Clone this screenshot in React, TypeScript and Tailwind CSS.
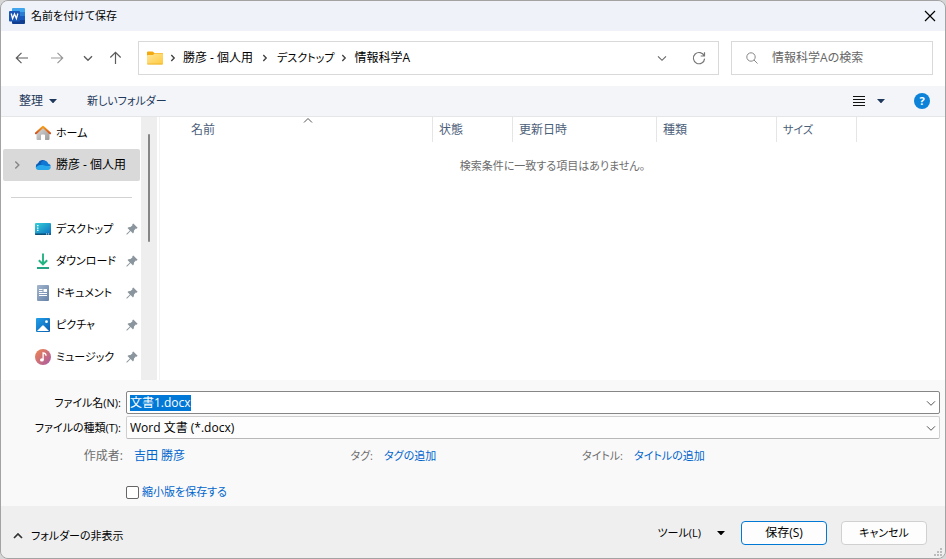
import { useEffect, useRef, useState } from "react";
import type { ReactNode } from "react";

type StrokeProps = { className?: string; d: string; width?: number };

function Stroke({ className = "", d, width = 1 }: StrokeProps) {
  return (
    <svg viewBox="0 0 16 16" className={`size-4 shrink-0 ${className}`} fill="none" stroke="currentColor" strokeWidth={width} aria-hidden="true">
      <path d={d} />
    </svg>
  );
}

const DOWN = "M4 6.3 8 10.3 12 6.3";
const RIGHT = "M6.3 5 9.2 8 6.3 11";

function Triangle({ className = "" }: { className?: string }) {
  return (
    <svg viewBox="0 0 8 4" className={`h-1 w-2 shrink-0 ${className}`} fill="currentColor" aria-hidden="true">
      <path d="M0 0h8L4 4.4z" />
    </svg>
  );
}

function WordIcon() {
  return (
    <svg viewBox="0 0 16 16" className="size-4 shrink-0" aria-hidden="true">
      <path d="M4 0h11q1 0 1 1v3.2H3V1q0-1 1-1z" fill="#41a5ee" />
      <path d="M3 4h13v4H3z" fill="#2b7cd3" />
      <path d="M3 8h13v4H3z" fill="#185abd" />
      <path d="M3 12h13v3q0 1-1 1H4q-1 0-1-1z" fill="#103f91" />
      <rect x="0" y="3" width="11" height="10.4" rx="1" fill="#1a56b4" />
      <path d="M2.200 5.500 3.600 10.600 5.500 6 7.400 10.600 8.800 5.500" fill="none" stroke="#fff" strokeWidth="1.300" />
    </svg>
  );
}

function FolderIcon() {
  return (
    <svg viewBox="0 0 16 14" className="h-3.5 w-4 shrink-0" aria-hidden="true">
      <defs>
        <linearGradient id="folder" x1="0" y1="0" x2="1" y2="1">
          <stop offset="0" stopColor="#ffe69a" />
          <stop offset="1" stopColor="#ffc93c" />
        </linearGradient>
      </defs>
      <path d="M0 1.500Q0 .5 1 .5h4.600L7.400 2H15q1 0 1 1v4H0z" fill="#f2a90f" />
      <path d="M0 5q0-1 1-1h5l1.500-1.500H15q1 0 1 1v9q0 1-1 1H1q-1 0-1-1z" fill="url(#folder)" />
      <path d="M.4 13h15.200" stroke="#eab02a" strokeWidth=".8" />
    </svg>
  );
}

function HomeIcon() {
  return (
    <svg viewBox="0 0 16 16" className="size-4" aria-hidden="true">
      <defs>
        <linearGradient id="wall" x1="0" y1="0" x2="1" y2="1">
          <stop offset="0" stopColor="#dcdcdc" />
          <stop offset="1" stopColor="#9a9a9a" />
        </linearGradient>
        <linearGradient id="roof" x1="0" y1="0" x2="0" y2="1">
          <stop offset="0" stopColor="#f7a21b" />
          <stop offset="1" stopColor="#d3501c" />
        </linearGradient>
      </defs>
      <path d="M1.500 7.500 8 2l6.500 5.500V14q0 1-1 1H10V10.500q0-1-1-1H7q-1 0-1 1V15H2.500q-1 0-1-1z" fill="url(#wall)" />
      <path d="M.9 8.300 8 1.700l7.100 6.600" fill="none" stroke="url(#roof)" strokeWidth="2" strokeLinecap="round" strokeLinejoin="round" />
    </svg>
  );
}

function CloudIcon() {
  return (
    <svg viewBox="0 0 16 16" className="size-4" aria-hidden="true">
      <path d="M3.500 12.500A3.200 3.200 0 0 1 3 6.300a4.800 4.800 0 0 1 8.700-.9L8 10z" fill="#0a5cb8" />
      <path d="M5.500 6.200A5 5 0 0 1 11 3.900c1.200.6 2 1.600 2.300 2.800a3 3 0 0 1 2.500 2.500L10 10z" fill="#0f78d4" />
      <path d="M.6 10.500Q4.500 6 10 8.800l5.700.7a3 3 0 0 1-2.900 3.500H3.700Q1.400 13 .6 10.500z" fill="#28a8ea" />
    </svg>
  );
}

function DesktopIcon() {
  return (
    <svg viewBox="0 0 16 16" className="size-4" aria-hidden="true">
      <defs>
        <linearGradient id="desk" x1="0" y1="0" x2="1" y2="1">
          <stop offset="0" stopColor="#35d0d8" />
          <stop offset="1" stopColor="#0a6cc0" />
        </linearGradient>
      </defs>
      <rect y="2" width="16" height="12" rx="1" fill="url(#desk)" />
      <path d="M2 4h1.500v1.300H2zM2 6.400h1.500v1.300H2zM2 8.800h1.500v1.300H2z" fill="#fff" />
      <path d="M0 12.500h16v.5q0 1-1 1H1q-1 0-1-1z" fill="#0c5078" />
      <path d="M11 13h1.200M13 13h1.200" stroke="#e5f4ff" />
    </svg>
  );
}

function DownloadIcon() {
  return (
    <svg viewBox="0 0 16 16" className="size-4" fill="none" strokeWidth="1.900" aria-hidden="true">
      <path d="M8 .5V11M3.800 7.200 8 11.300l4.200-4.100" stroke="#23b483" />
      <path d="M2 15h12" stroke="#18a07c" />
    </svg>
  );
}

function DocumentIcon() {
  return (
    <svg viewBox="0 0 16 16" className="size-4" aria-hidden="true">
      <defs>
        <linearGradient id="doc" x1="0" y1="0" x2="1" y2="1">
          <stop offset="0" stopColor="#a3b6cd" />
          <stop offset="1" stopColor="#6582a8" />
        </linearGradient>
      </defs>
      <rect x="2" width="12" height="16" rx="1" fill="url(#doc)" />
      <path d="M4 4.500h3.500M4 6.500h3.500M4 8.500h8M4 10.500h8" stroke="#fff" />
      <rect x="8.500" y="4" width="3.500" height="3" fill="#fff" />
    </svg>
  );
}

function PictureIcon() {
  return (
    <svg viewBox="0 0 16 16" className="size-4" aria-hidden="true">
      <defs>
        <linearGradient id="pic" x1="0" y1="0" x2="1" y2="1">
          <stop offset="0" stopColor="#22a0ea" />
          <stop offset="1" stopColor="#0a5db0" />
        </linearGradient>
      </defs>
      <rect x="1" y="1" width="14" height="14" rx="1" fill="url(#pic)" />
      <path d="M2 14 7.200 8.700q.8-.7 1.600 0L14 14z" fill="#fff" />
      <circle cx="11.500" cy="4.700" r="1.400" fill="#fff" />
    </svg>
  );
}

function MusicIcon() {
  return (
    <svg viewBox="0 0 16 16" className="size-4" aria-hidden="true">
      <defs>
        <linearGradient id="music" x1="0" y1="0" x2="1" y2="1">
          <stop offset="0" stopColor="#f0864e" />
          <stop offset="1" stopColor="#a85aa6" />
        </linearGradient>
      </defs>
      <circle cx="8" cy="8" r="8" fill="url(#music)" />
      <ellipse cx="6.900" cy="10.900" rx="1.900" ry="1.700" fill="#fff" />
      <path d="M8.100 11V3.800q2.800.2 3 2.900" fill="none" stroke="#fff" strokeWidth="1.300" />
    </svg>
  );
}

function PinIcon() {
  return (
    <svg viewBox="0 0 12 12" className="size-3 shrink-0" aria-hidden="true">
      <path d="M7.300.4 11.600 4.700 10.700 5.700 9.800 5.500 8 7.500Q8.200 9.400 7 10.500L4.600 8.100 1.200 11.500.4 11.600.5 10.800 3.900 7.400 1.500 5Q2.600 3.800 4.500 4L6.500 2.200 6.300 1.300z" fill="#8a959d" />
    </svg>
  );
}

type Place = { name: string; icon: ReactNode };

const PINNED: Place[] = [
  { name: "デスクトップ", icon: <DesktopIcon /> },
  { name: "ダウンロード", icon: <DownloadIcon /> },
  { name: "ドキュメント", icon: <DocumentIcon /> },
  { name: "ピクチャ", icon: <PictureIcon /> },
  { name: "ミュージック", icon: <MusicIcon /> },
];

function TitleBar() {
  return (
    <header className="flex h-[30px] shrink-0 items-center justify-between bg-[#eff3f9] pr-[7px] pl-2">
      <div className="flex items-center gap-1.5">
        <WordIcon />
        <h1 className="text-[11px] text-black">名前を付けて保存</h1>
      </div>
      <button type="button" aria-label="閉じる" className="text-black">
        <Stroke d="M3 3 13 13M13 3 3 13" width={1.2} />
      </button>
    </header>
  );
}

function AddressRow() {
  return (
    <div className="flex h-[55px] shrink-0 items-center gap-3 bg-white pr-3 pb-px pl-[13px]">
      <nav aria-label="履歴" className="flex items-center gap-[19px] pr-[3px] text-[#5c5c5c]">
        <button type="button" aria-label="戻る">
          <Stroke d="M14 8H2.500M7.500 2.800 2.300 8l5.200 5.200" width={1.2} />
        </button>
        <button type="button" aria-label="進む" className="text-[#999]">
          <Stroke d="M2 8h11.500M8.500 2.800 13.700 8l-5.200 5.200" width={1.2} />
        </button>
        <button type="button" aria-label="最近の場所" className="-mx-1">
          <Stroke d={DOWN} width={1.4} />
        </button>
        <button type="button" aria-label="上へ" className="-ml-1">
          <Stroke d="M8.500 14V2.500M3.300 7.500 8.500 2.300l5.200 5.200" width={1.2} />
        </button>
      </nav>
      <div className="flex h-[34px] min-w-0 flex-1 items-center border border-[#d9d9d9] pr-[11px] pl-2 text-black">
        <FolderIcon />
        <Stroke d={RIGHT} width={1.4} className="mx-0.5 text-[#444]" />
        <button type="button" className="whitespace-nowrap">勝彦 - 個人用</button>
        <Stroke d={RIGHT} width={1.4} className="mx-1 text-[#444]" />
        <button type="button" className="text-[11px] whitespace-nowrap">デスクトップ</button>
        <Stroke d={RIGHT} width={1.4} className="mx-0.5 text-[#444]" />
        <button type="button" className="whitespace-nowrap">情報科学A</button>
        <button type="button" aria-label="以前の場所" className="ml-auto text-[#666]">
          <Stroke d={DOWN} width={1.1} />
        </button>
        <button type="button" aria-label="最新の情報に更新" className="ml-[21px] text-[#777]">
          <Stroke d="M13.200 6A5.600 5.600 0 1 0 13.600 8.600M13.500 2.200V6H9.700" width={1.2} />
        </button>
      </div>
      <label className="flex h-[34px] w-[202px] items-center gap-3 border border-[#d9d9d9] pr-2 pl-3">
        <svg viewBox="0 0 16 16" className="size-4 shrink-0 text-[#888]" fill="none" stroke="currentColor" aria-hidden="true">
          <circle cx="7" cy="7" r="4.200" />
          <path d="M10 10 13.500 13.500" />
        </svg>
        <input type="search" aria-label="検索" placeholder="情報科学Aの検索" className="w-full min-w-0 bg-transparent outline-none placeholder:text-[#666]" />
      </label>
    </div>
  );
}

function Toolbar() {
  return (
    <div className="flex h-[31px] shrink-0 items-center border-b border-[#e5e6e8] bg-[#f4f5f8] pr-[15px] pl-[18px] text-[#1e395b]">
      <button type="button" className="flex items-center gap-1.5">
        整理
        <Triangle />
      </button>
      <button type="button" className="ml-[30px] text-[11px]">新しいフォルダー</button>
      <button type="button" aria-label="表示方法の変更" className="ml-auto flex items-center gap-3">
        <svg viewBox="0 0 12 10" className="h-2.5 w-3" stroke="#111" aria-hidden="true">
          <path d="M0 .5h12M0 3.500h12M0 6.500h12M0 9.500h12" />
        </svg>
        <Triangle />
      </button>
      <button type="button" aria-label="ヘルプ" className="ml-[29px] flex size-4 items-center justify-center rounded-full bg-[#0c83d9] text-[11px] font-bold text-white">
        ?
      </button>
    </div>
  );
}

function Sidebar() {
  return (
    <nav aria-label="場所" className="w-[140px] shrink-0 bg-white text-black">
      <ul>
        <li>
          <a href="#home" className="flex h-8 items-center gap-[5px] pl-[34px]">
            <HomeIcon />
            <span className="text-[11px] whitespace-nowrap">ホーム</span>
          </a>
        </li>
        <li className="pr-px pl-0.5">
          <a href="#onedrive" aria-current="page" className="flex h-8 items-center gap-[5px] rounded-xs bg-[#d9d9d9] pl-1.5">
            <Stroke d="M6.300 4.500 9.800 8 6.300 11.500" width={1.5} className="mr-[5px] text-[#888]" />
            <CloudIcon />
            <span className="whitespace-nowrap">勝彦 - 個人用</span>
          </a>
        </li>
      </ul>
      <div className="flex h-8 items-center pr-[9px] pl-2.5">
        <hr className="w-full border-[#d2d2d2]" />
      </div>
      <ul>
        {PINNED.map((place) => (
          <li key={place.name}>
            <a href={`#${place.name}`} className="flex h-8 items-center gap-[5px] pr-[3px] pl-[34px]">
              {place.icon}
              <span className="min-w-0 flex-1 text-[11px] whitespace-nowrap">{place.name}</span>
              <PinIcon />
            </a>
          </li>
        ))}
      </ul>
    </nav>
  );
}

function FileList() {
  const head = "h-[25px] border-r border-[#e5e5e5] pl-1.5 text-left align-middle font-normal";
  return (
    <div className="min-w-0 flex-1 border-l border-[#f3f3f3] bg-white">
      <table className="w-full table-fixed border-separate border-spacing-0">
        <colgroup>
          <col className="w-[273px]" />
          <col className="w-20" />
          <col className="w-36" />
          <col className="w-[120px]" />
          <col className="w-20" />
          <col />
        </colgroup>
        <thead className="text-[#4c607a]">
          <tr>
            <th scope="col" className="relative h-[25px] border-r border-[#e5e5e5] pl-[31px] text-left align-middle font-normal">
              名前
              <Stroke d="M4 9.500 8 5.500 12 9.500" className="absolute -top-1 left-[140px] text-[#555]" />
            </th>
            <th scope="col" className={head}>状態</th>
            <th scope="col" className={head}>更新日時</th>
            <th scope="col" className={head}>種類</th>
            <th scope="col" className={head}>
              <span className="text-[11px]">サイズ</span>
            </th>
            <td />
          </tr>
        </thead>
        <tbody>
          <tr>
            <td colSpan={6} className="h-12 text-center text-[11px] text-[#6d6d6d]">
              検索条件に一致する項目はありません。
            </td>
          </tr>
        </tbody>
      </table>
    </div>
  );
}

function Property({ label, children }: { label: ReactNode; children: ReactNode }) {
  return (
    <div className="flex items-center gap-[11px] whitespace-nowrap">
      <dt className="w-[122px] text-right text-[#6d6d6d]">{label}</dt>
      <dd>
        <a href="#edit" className="text-[#0066cc]">{children}</a>
      </dd>
    </div>
  );
}

function SaveForm() {
  const nameRef = useRef<HTMLInputElement>(null);
  const [name, setName] = useState("文書1.docx");

  useEffect(() => {
    nameRef.current?.focus();
    nameRef.current?.select();
  }, []);

  const label = "w-[120px] shrink-0 text-right text-[11px] whitespace-nowrap";

  return (
    <div className="shrink-0 bg-[#f9f9f9] pt-[11px] pb-0.5 text-black">
      <div className="flex flex-col gap-0.5 pr-[5px]">
        <div className="flex items-center gap-[5px]">
          <label htmlFor="file-name" className={label}>ファイル名(N):</label>
          <div className="relative flex h-[23px] flex-1 items-center rounded-xs border border-[#868686] bg-white pr-6 pl-[3px]">
            <input
              id="file-name"
              ref={nameRef}
              value={name}
              onChange={(e) => setName(e.target.value)}
              className="w-full leading-4 outline-none selection:bg-[#0078d7] selection:text-white"
            />
            <Stroke d={DOWN} className="absolute right-0 text-[#555]" />
          </div>
        </div>
        <div className="flex items-center gap-[5px]">
          <label htmlFor="file-type" className={label}>ファイルの種類(T):</label>
          <div className="relative flex h-[23px] flex-1 items-center rounded-xs border border-[#cfcfcf] border-b-[#b8b8b8] bg-[#fdfdfd]">
            <select id="file-type" className="w-full appearance-none pr-6 pl-[3px] leading-4 outline-none">
              <option>Word 文書 (*.docx)</option>
            </select>
            <Stroke d={DOWN} className="pointer-events-none absolute right-0 text-[#555]" />
          </div>
        </div>
      </div>
      <dl className="mt-[5px] grid h-6 grid-cols-[250px_250px_1fr] items-center">
        <Property label="作成者:">吉田 勝彦</Property>
        <Property label={<span className="text-[11px]">タグ:</span>}>
          <span className="text-[11px]">タグの追加</span>
        </Property>
        <Property label={<span className="text-[11px]">タイトル:</span>}>
          <span className="text-[11px]">タイトルの追加</span>
        </Property>
      </dl>
      <div className="mt-3 flex h-6 items-center pl-[125px]">
        <label className="flex items-center gap-[3px] text-[11px] text-[#0066cc]">
          <input type="checkbox" className="size-[13px] appearance-none rounded-xs border border-[#666] bg-white checked:bg-[#0067c0]" />
          縮小版を保存する
        </label>
      </div>
    </div>
  );
}

function Footer() {
  return (
    <footer className="relative flex h-[52px] shrink-0 items-center bg-[#efefef] pt-0.5 pr-[18px] pl-[9px] text-black">
      <button type="button" className="mt-1.5 flex items-center gap-[5px] text-[11px]">
        <Stroke d="M4 10 8 6 12 10" width={1.7} className="text-[#333]" />
        フォルダーの非表示
      </button>
      <button type="button" className="ml-auto flex items-center gap-4 text-[11px]">
        ツール(L)
        <Triangle />
      </button>
      <button type="submit" className="ml-4 h-6 w-[86px] rounded border border-[#0078d4] bg-[#fdfdfd]">保存(S)</button>
      <button type="button" className="ml-3.5 h-6 w-[86px] rounded border border-[#d0d0d0] bg-[#fdfdfd] text-[11px]">キャンセル</button>
      <svg viewBox="0 0 8 8" className="absolute right-[3px] bottom-[2px] size-2" fill="#bcbcbc" aria-hidden="true">
        <path d="M6 0h2v2H6zM3 3h2v2H3zM6 3h2v2H6zM0 6h2v2H0zM3 6h2v2H3zM6 6h2v2H6z" />
      </svg>
    </footer>
  );
}

export default function App() {
  return (
    <div className="flex min-h-screen bg-[#d6d6d6] font-['Open_Sans','Noto_Sans_CJK_JP',sans-serif] text-xs leading-4 [font-feature-settings:'palt']">
      <form role="dialog" aria-label="名前を付けて保存" onSubmit={(e) => e.preventDefault()} className="flex min-w-0 flex-1 flex-col overflow-hidden rounded-lg border border-[#a3a3a3]">
        <TitleBar />
        <AddressRow />
        <Toolbar />
        <div className="flex flex-1 bg-white">
          <Sidebar />
          <div className="mr-0.5 w-4 shrink-0 bg-[#eeeeee] pt-[17px] pl-[7px]">
            <div className="h-[108px] w-0.5 rounded-full bg-[#868686]" />
          </div>
          <FileList />
        </div>
        <SaveForm />
        <Footer />
      </form>
    </div>
  );
}
